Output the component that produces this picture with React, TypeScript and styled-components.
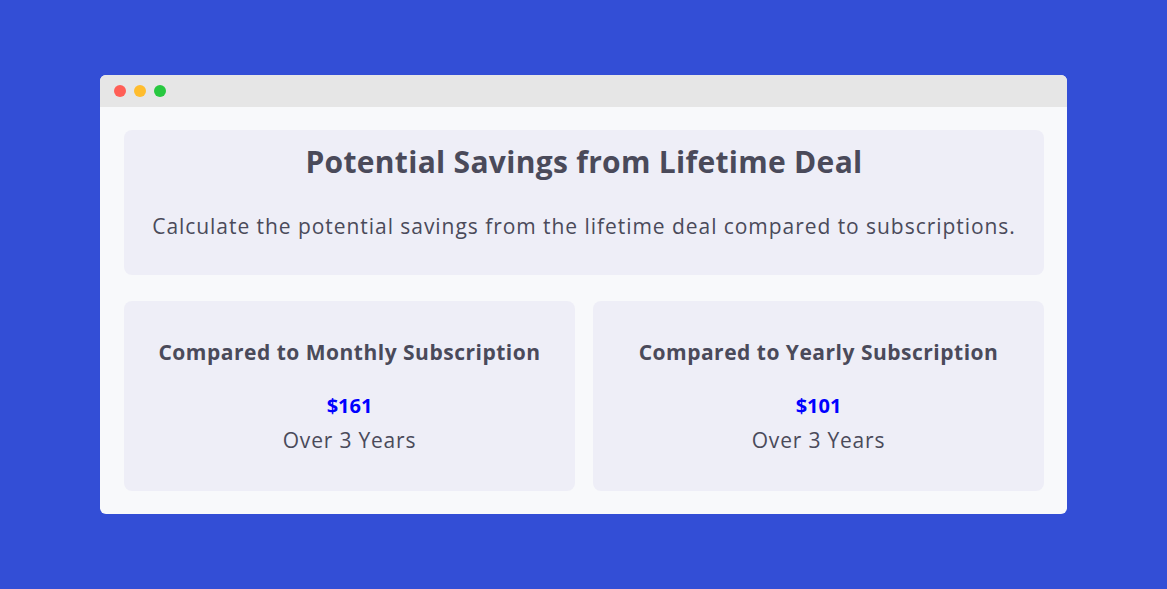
import React from "react";
import styled, { createGlobalStyle } from "styled-components";

const Global = createGlobalStyle`
  html, body { margin: 0; padding: 0; }
  body {
    background: #334ed6;
    font-family: "Open Sans", "Noto Sans", sans-serif;
    color: #4a4a5a;
  }
`;

const Page = styled.div`
  width: 1167px;
  height: 589px;
  display: flex;
  justify-content: center;
  padding-top: 75px;
  box-sizing: border-box;
`;

const Window = styled.div`
  width: 967px;
  height: 439px;
  background: #f8f9fb;
  border-radius: 6px;
  overflow: hidden;
  display: flex;
  flex-direction: column;
`;

const TitleBar = styled.div`
  height: 32px;
  background: #e6e6e6;
  display: flex;
  align-items: center;
  gap: 8px;
  padding-left: 14px;
`;

const Dot = styled.span<{ $c: string }>`
  width: 12px;
  height: 12px;
  border-radius: 50%;
  background: ${(p) => p.$c};
`;

const Body = styled.div`
  flex: 1;
  padding: 23px 23px 23px 24px;
  display: flex;
  flex-direction: column;
  gap: 26px;
`;

const Card = styled.div`
  background: #eeeef7;
  border-radius: 8px;
  display: flex;
  flex-direction: column;
  align-items: center;
  text-align: center;
`;

const Hero = styled(Card)`
  height: 145px;
  box-sizing: border-box;
  padding-top: 12px;
`;

const Title = styled.h1`
  margin: 0;
  font-size: 30px;
  font-weight: 700;
  line-height: 40px;
  letter-spacing: 0.3px;
  color: #4a4a5a;
`;

const Subtitle = styled.p`
  margin: 29px 0 0;
  font-size: 21px;
  line-height: 30px;
  font-weight: 400;
  letter-spacing: 0.95px;
`;

const Row = styled.div`
  display: grid;
  grid-template-columns: 1fr 1fr;
  gap: 18px;
`;

const Stat = styled(Card)`
  height: 190px;
  box-sizing: border-box;
  padding-top: 36px;
`;

const StatTitle = styled.h2`
  margin: 0;
  font-size: 21px;
  font-weight: 700;
  line-height: 30px;
  letter-spacing: 0.5px;
`;

const Amount = styled.div`
  margin-top: 24px;
  font-size: 20px;
  font-weight: 700;
  line-height: 30px;
  color: #0000ff;
`;

const Period = styled.div`
  font-size: 21px;
  line-height: 30px;
  margin-top: 4px;
  letter-spacing: 0.8px;
`;

export default function App() {
  return (
    <>
      <Global />
      <Page>
        <Window>
          <TitleBar>
            <Dot $c="#ff5f57" />
            <Dot $c="#ffbd2e" />
            <Dot $c="#28c840" />
          </TitleBar>
          <Body>
            <Hero>
              <Title>Potential Savings from Lifetime Deal</Title>
              <Subtitle>
                Calculate the potential savings from the lifetime deal compared to subscriptions.
              </Subtitle>
            </Hero>
            <Row>
              <Stat>
                <StatTitle>Compared to Monthly Subscription</StatTitle>
                <Amount>$161</Amount>
                <Period>Over 3 Years</Period>
              </Stat>
              <Stat>
                <StatTitle>Compared to Yearly Subscription</StatTitle>
                <Amount>$101</Amount>
                <Period>Over 3 Years</Period>
              </Stat>
            </Row>
          </Body>
        </Window>
      </Page>
    </>
  );
}
